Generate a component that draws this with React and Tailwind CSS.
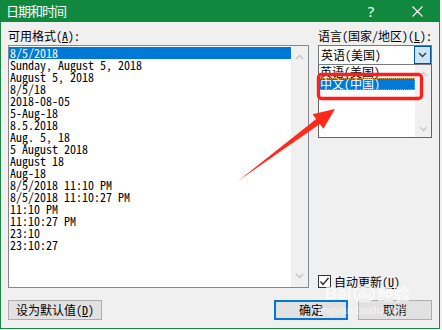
import React from "react";

const formats = [
  "8/5/2018",
  "Sunday, August 5, 2018",
  "August 5, 2018",
  "8/5/18",
  "2018-08-05",
  "5-Aug-18",
  "8.5.2018",
  "Aug. 5, 18",
  "5 August 2018",
  "August 18",
  "Aug-18",
  "8/5/2018 11:10 PM",
  "8/5/2018 11:10:27 PM",
  "11:10 PM",
  "11:10:27 PM",
  "23:10",
  "23:10:27",
];

const Chevron = ({ up, className }) => (
  <svg width="9" height="6" viewBox="0 0 9 6" className={className}>
    <polyline
      points={up ? "1,5 4.5,1.5 8,5" : "1,1 4.5,4.5 8,1"}
      fill="none"
      stroke="currentColor"
      strokeWidth="1.3"
    />
  </svg>
);

const App = () => {
  return (
    <div className="relative w-[442px] h-[330px] overflow-hidden bg-[#f0f0f0] text-[12px] leading-[12px] text-black font-['Noto_Sans_Mono_CJK_SC','Liberation_Mono','Noto_Sans_CJK_SC',monospace]">
      <div className="w-[440px] h-[329px] flex flex-col">
        {/* title bar */}
        <div className="h-[22px] bg-[#10893e] flex items-center text-white">
          <span className="pl-[6px] text-[13px] tracking-[-1px] font-['Noto_Sans_CJK_SC',sans-serif]">
            日期和时间
          </span>
          <span className="ml-auto w-[46px] text-center text-[15px] font-['Noto_Sans',sans-serif]">?</span>
          <span className="w-[46px] flex justify-center">
            <svg width="11" height="11" viewBox="0 0 11 11">
              <path d="M0.5 0.5 L10.5 10.5 M10.5 0.5 L0.5 10.5" stroke="white" strokeWidth="1.1" />
            </svg>
          </span>
        </div>

        {/* body */}
        <div className="flex-1 flex flex-col border-x border-b border-[#1a8a44] pt-[8px] px-[7px]">
          <div className="flex gap-[9px]">
            {/* left */}
            <div className="w-[302px] flex flex-col">
              <div className="h-[12px]">
                可用格式(<span className="underline">A</span>):
              </div>
              <div className="mt-[3px] h-[243px] flex border border-[#828790] bg-white">
                <div className="flex-1 pt-[1px]">
                  {formats.map((f, i) => (
                    <div
                      key={f}
                      className={`h-[12px] pl-[1px] whitespace-pre ${
                        i === 0 ? "bg-[#0078d7] text-white" : ""
                      }`}
                    >
                      {f}
                    </div>
                  ))}
                </div>
                <div className="w-[17px] bg-[#f0f0f0] flex flex-col items-center justify-between pt-[8px] pb-[8px] text-[#c2c2c2]">
                  <Chevron up />
                  <Chevron />
                </div>
              </div>
            </div>

            {/* right */}
            <div className="w-[114px] flex flex-col">
              <div className="h-[12px] whitespace-pre">
                语言(国家/地区)(<span className="underline">L</span>):
              </div>
              <div className="mt-[3px] h-[20px] flex border border-[#7a7a7a] bg-white">
                <div className="flex-1 pl-[2px] flex items-center">英语(美国)</div>
                <div className="w-[17px] bg-[#cce4f7] border border-[#005499] flex items-center justify-center text-[#333]">
                  <Chevron />
                </div>
              </div>
              <div className="h-[73px] flex border border-t-0 border-[#646464] bg-white">
                <div className="flex-1 pt-[1px]">
                  <div className="h-[12px] pl-[1px]">英语(美国)</div>
                  <div className="h-[12px] pl-[1px] bg-[#0078d7] text-white outline-1 outline-dotted outline-[#e8a33a] -outline-offset-1">
                    中文(中国)
                  </div>
                </div>
                <div className="w-[16px] bg-[#f0f0f0] flex flex-col items-center justify-between pt-[6px] pb-[5px] text-[#c8c8c8]">
                  <Chevron up />
                  <Chevron />
                </div>
              </div>
              <div className="mt-auto h-[13px] flex items-center gap-[3px]">
                <div className="w-[13px] h-[13px] border border-[#333] bg-white flex items-center justify-center">
                  <svg width="11" height="11" viewBox="0 0 11 11">
                    <polyline points="1.5,5.5 4,8.5 9.5,2" fill="none" stroke="#222" strokeWidth="1.2" />
                  </svg>
                </div>
                <span>
                  自动更新(<span className="underline">U</span>)
                </span>
              </div>
            </div>
          </div>

          {/* buttons */}
          <div className="mt-[12px] flex">
            <button className="w-[94px] h-[20px] bg-[#e1e1e1] border border-[#adadad] flex items-center justify-center">
              设为默认值(<span className="underline">D</span>)
            </button>
            <button className="ml-auto w-[74px] h-[20px] bg-[#e1e1e1] border-2 border-[#0078d7] flex items-center justify-center">
              确定
            </button>
            <button className="ml-[10px] w-[74px] h-[20px] bg-[#e1e1e1] border border-[#adadad] flex items-center justify-center">
              取消
            </button>
          </div>
        </div>
      </div>

      {/* baidu watermark */}
      <div className="absolute left-[325px] top-[285px] flex items-center text-white/70 font-['Liberation_Sans',sans-serif] font-bold text-[17px] leading-[17px] pointer-events-none">
        <span>Bai</span>
        <span className="mx-[2px] w-[22px] h-[16px] rounded-full border-2 border-white/70 text-[11px] leading-[12px] flex items-center justify-center">
          du
        </span>
        <span className="font-['Noto_Sans_CJK_SC',sans-serif] text-[16px]">经验</span>
      </div>
      <div className="absolute left-[318px] top-[304px] text-white/60 font-['Liberation_Sans',sans-serif] text-[11px] leading-[12px] pointer-events-none">
        jingyan.baidu.com
      </div>

      {/* annotation */}
      <svg className="absolute inset-0 pointer-events-none" width="442" height="330" viewBox="0 0 442 330">
        <rect x="318.5" y="74.5" width="103" height="24" rx="3" fill="none" stroke="#ff1e1e" strokeWidth="3.3" />
        <polygon
          points="238,181 319.8,123.9 323.4,128.7 335,109 312.6,114.3 316.2,119.1"
          fill="#ff2a1a"
        />
      </svg>
    </div>
  );
};

export default App;
